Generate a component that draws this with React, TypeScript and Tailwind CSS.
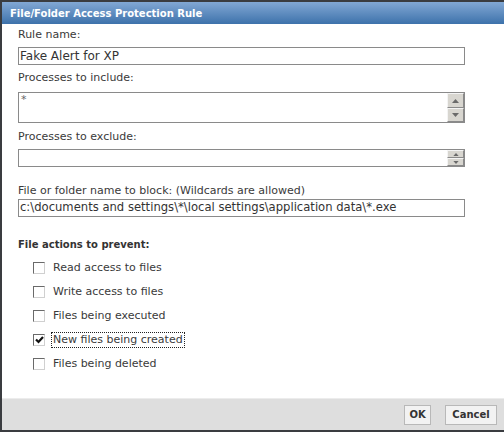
import React from "react";

function Label({ children, className = "" }: { children: React.ReactNode; className?: string }) {
  return <div className={"h-[14px] leading-[14px] text-[11px] text-[#3a3a3a] " + className}>{children}</div>;
}

function ScrollBtn({ dir, h, small }: { dir: "up" | "down"; h: string; small?: boolean }) {
  return (
    <div className={"w-[17px] bg-[#d8d6d0] border border-t-[#f4f4f4] border-l-[#f4f4f4] border-r-[#8a8a8a] border-b-[#8a8a8a] flex items-center justify-center " + h}>
      <svg width={small ? 6 : 7} height={small ? 3 : 4} viewBox="0 0 7 4">
        {dir === "up" ? <polygon points="0,4 7,4 3.5,0" fill="#6a6a6a" /> : <polygon points="0,0 7,0 3.5,4" fill="#6a6a6a" />}
      </svg>
    </div>
  );
}

function Check({ label, checked, focus }: { label: string; checked?: boolean; focus?: boolean }) {
  return (
    <div className="h-[24px] flex items-center pl-[15px]">
      <div className="w-[12px] h-[12px] bg-white border border-t-[#6a6a6a] border-l-[#6a6a6a] border-r-[#d0d0d0] border-b-[#d0d0d0] flex items-center justify-center">
        {checked && (
          <svg width="9" height="8" viewBox="0 0 9 8">
            <path d="M1 3.5 L3.5 6 L8 1" stroke="#111" strokeWidth="2.2" fill="none" />
          </svg>
        )}
      </div>
      <div className={"ml-[6px] text-[11px] leading-[14px] text-[#3a3a3a] px-[1px] " + (focus ? "border border-dotted border-[#222]" : "border border-transparent")}>
        {label}
      </div>
    </div>
  );
}

export default function App() {
  return (
    <div className="w-[504px] h-[432px] bg-[#3a3c40] pl-[2px] pt-[2px] pb-[2px] flex flex-col font-['DejaVu_Sans',Verdana,sans-serif]">
      <div className="h-[22px] bg-gradient-to-b from-[#82a8d4] to-[#3d72ab] flex items-center pl-[8px] text-white font-bold text-[10px] shrink-0">
        File/Folder Access Protection Rule
      </div>
      <div className="flex-1 bg-white pl-[16px] flex flex-col">
        <Label className="mt-[4px]">Rule name:</Label>
        <div className="mt-[5px] w-[447px] h-[18px] border border-[#8a8a8a] flex items-center pl-[1px] text-[12px] text-[#333]">
          Fake Alert for XP
        </div>
        <Label className="mt-[6px]">Processes to include:</Label>
        <div className="mt-[7px] w-[447px] h-[31px] border border-[#8a8a8a] flex">
          <div className="flex-1 pl-[2px] text-[11px] leading-[14px] text-[#666]">*</div>
          <div className="flex flex-col">
            <ScrollBtn dir="up" h="h-[15px]" />
            <ScrollBtn dir="down" h="h-[14px]" />
          </div>
        </div>
        <Label className="mt-[7px]">Processes to exclude:</Label>
        <div className="mt-[5px] w-[447px] h-[18px] border border-[#8a8a8a] flex">
          <div className="flex-1" />
          <div className="flex flex-col">
            <ScrollBtn dir="up" h="h-[8px]" small />
            <ScrollBtn dir="down" h="h-[8px]" small />
          </div>
        </div>
        <Label className="mt-[17px]">File or folder name to block: (Wildcards are allowed)</Label>
        <div className="mt-[1px] w-[447px] h-[18px] border border-[#8a8a8a] flex items-center pl-[1px] text-[11.6px] text-[#333] whitespace-nowrap overflow-hidden">
          c:\documents and settings\*\local settings\application data\*.exe
        </div>
        <div className="mt-[21px] h-[14px] leading-[14px] text-[10px] font-bold text-[#333]">File actions to prevent:</div>
        <div className="mt-[4px] flex flex-col">
          <Check label="Read access to files" />
          <Check label="Write access to files" />
          <Check label="Files being executed" />
          <Check label="New files being created" checked focus />
          <Check label="Files being deleted" />
        </div>
      </div>
      <div className="h-[32px] shrink-0 bg-[#dedede] border-t border-[#ececec] flex items-center justify-end pr-[7px] gap-[14px]">
        <div className="h-[20px] w-[27px] bg-[#f2f2f2] border border-[#b8b8b8] flex items-center justify-center text-[10px] font-bold text-[#333]">OK</div>
        <div className="h-[20px] w-[52px] bg-[#f2f2f2] border border-[#b8b8b8] flex items-center justify-center text-[10px] font-bold text-[#333]">Cancel</div>
      </div>
    </div>
  );
}
